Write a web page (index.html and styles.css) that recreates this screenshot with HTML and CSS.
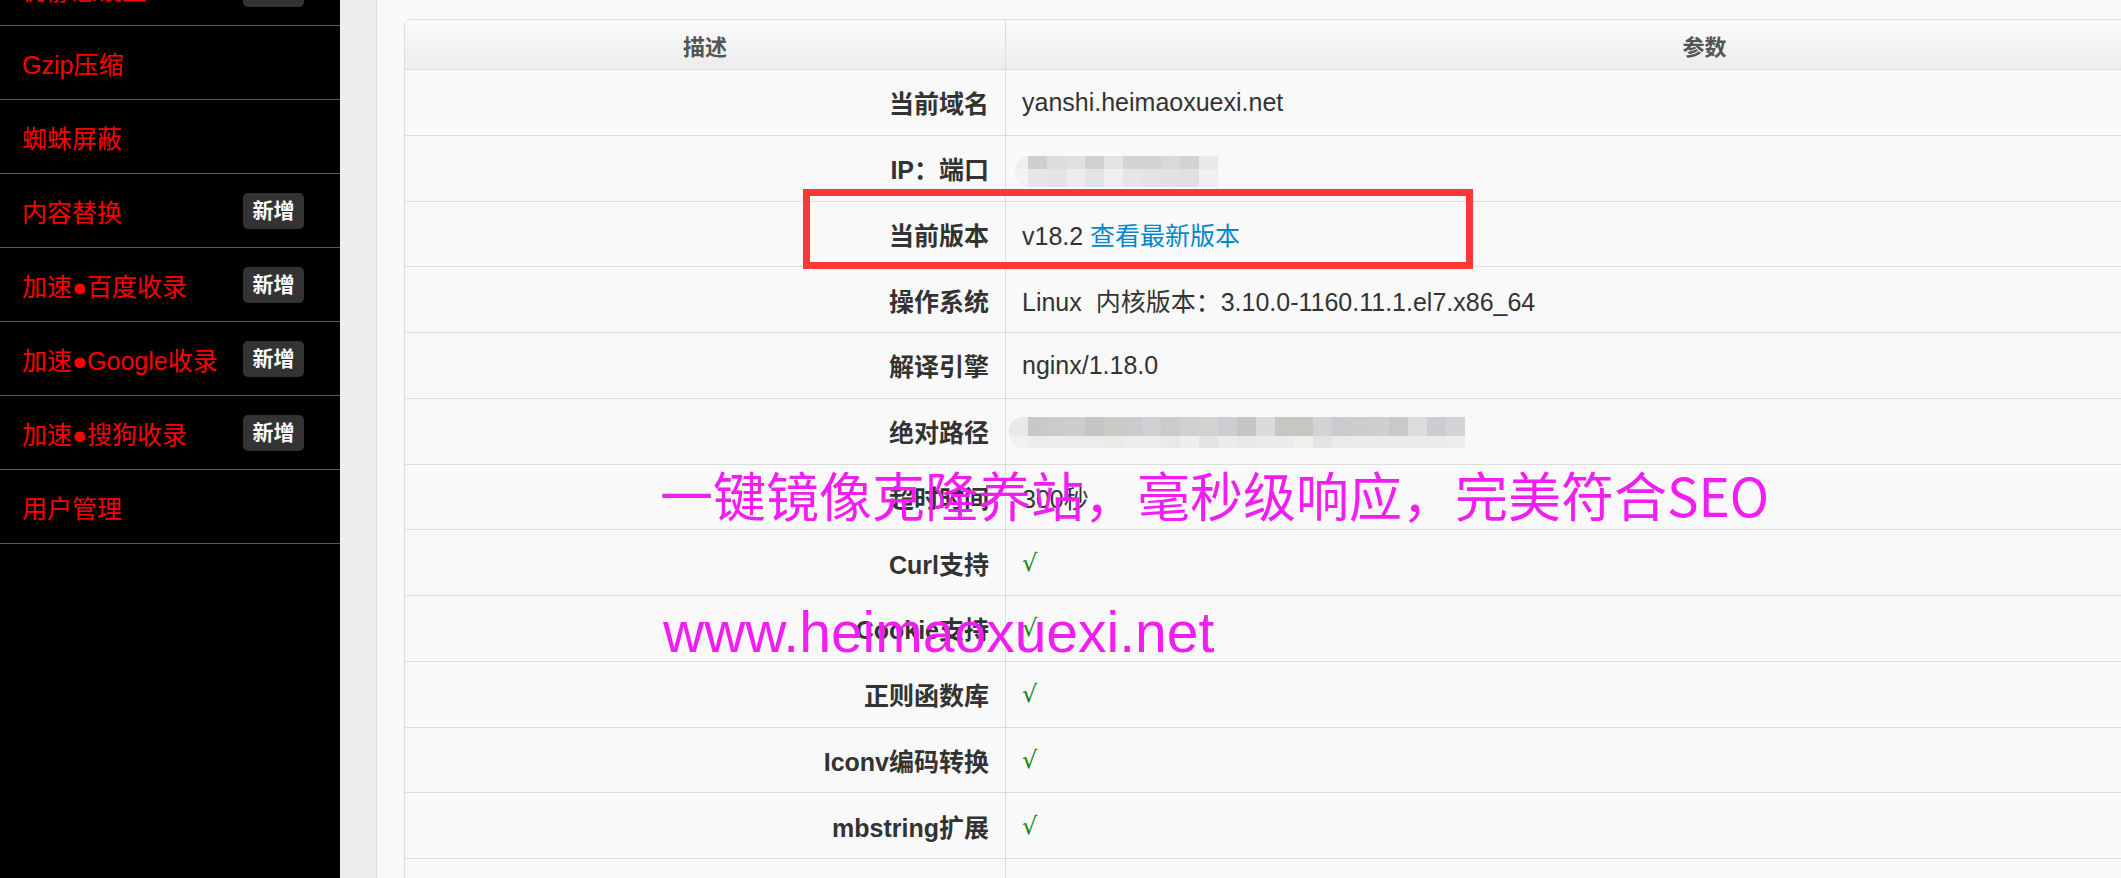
FILE: index.html
```html
<!DOCTYPE html>
<html lang="zh-CN">
<head>
    <meta charset="UTF-8">
    <meta name="viewport" content="width=device-width, initial-scale=1.0">
    <title>系统信息</title>
    <link rel="stylesheet" href="styles.css">
</head>
<body>
    <aside class="sidebar">
        <ul class="menu">
            <li class="menu-item menu-item-cut"><span>伪静态设置</span><span class="badge">新增</span></li>
            <li class="menu-item"><span>Gzip压缩</span></li>
            <li class="menu-item"><span>蜘蛛屏蔽</span></li>
            <li class="menu-item"><span>内容替换</span><span class="badge">新增</span></li>
            <li class="menu-item"><span>加速●百度收录</span><span class="badge">新增</span></li>
            <li class="menu-item"><span>加速●Google收录</span><span class="badge">新增</span></li>
            <li class="menu-item"><span>加速●搜狗收录</span><span class="badge">新增</span></li>
            <li class="menu-item"><span>用户管理</span></li>
        </ul>
    </aside>

    <main class="main">
        <div class="gutter"></div>
        <div class="panel">
            <table class="info">
                <thead>
                    <tr>
                        <th class="col-desc">描述</th>
                        <th>参数</th>
                    </tr>
                </thead>
                <tbody>
                    <tr><td class="label">当前域名</td><td>yanshi.heimaoxuexi.net</td></tr>
                    <tr><td class="label">IP：端口</td><td><span class="mosaic mosaic-ip"></span></td></tr>
                    <tr><td class="label">当前版本</td><td>v18.2 <a href="#" class="link">查看最新版本</a></td></tr>
                    <tr><td class="label">操作系统</td><td>Linux&nbsp; 内核版本：3.10.0-1160.11.1.el7.x86_64</td></tr>
                    <tr><td class="label">解译引擎</td><td>nginx/1.18.0</td></tr>
                    <tr><td class="label">绝对路径</td><td><span class="mosaic mosaic-path"></span></td></tr>
                    <tr><td class="label">超时时间</td><td>300秒</td></tr>
                    <tr><td class="label">Curl支持</td><td class="ok">√</td></tr>
                    <tr><td class="label">Cookie支持</td><td class="ok">√</td></tr>
                    <tr><td class="label">正则函数库</td><td class="ok">√</td></tr>
                    <tr><td class="label">Iconv编码转换</td><td class="ok">√</td></tr>
                    <tr><td class="label">mbstring扩展</td><td class="ok">√</td></tr>
                    <tr><td class="label">GD库</td><td class="ok">√</td></tr>
                </tbody>
            </table>
        </div>
    </main>

    <!-- annotation + watermarks burned over the screenshot -->
    <div class="highlight-box"></div>
    <div class="watermark watermark-slogan">一键镜像克隆养站，毫秒级响应，完美符合SEO</div>
    <div class="watermark watermark-url">www.heimaoxuexi.net</div>
</body>
</html>
```

FILE: styles.css
```css
* {
    margin: 0;
    padding: 0;
    box-sizing: border-box;
}

body {
    width: 2121px;
    height: 878px;
    overflow: hidden;
    display: flex;
    background: #f9f9f9;
    font-family: "Liberation Sans", "Noto Sans CJK SC", sans-serif;
    color: #333;
}

/* sidebar */
.sidebar {
    flex: none;
    width: 340px;
    background: #000;
}

.menu {
    list-style: none;
    margin-top: -48px;
}

.menu-item {
    height: 74px;
    display: flex;
    align-items: center;
    justify-content: space-between;
    padding: 0 36px 0 22px;
    border-bottom: 1px solid #5c5c5c;
    color: #ff0000;
    font-size: 25px;
}

.badge {
    background: #333;
    color: #fff;
    font-size: 21px;
    font-weight: bold;
    width: 61px;
    height: 36px;
    line-height: 36px;
    text-align: center;
    border-radius: 5px;
}

/* main area */
.main {
    flex: 1;
    display: flex;
}

.gutter {
    flex: none;
    width: 37px;
    background: #eeeeee;
    border-right: 1px solid #dcdcdc;
}

.panel {
    flex: 1;
    padding: 19px 0 0 27px;
}

.info {
    width: 2000px;
    border: 1px solid #dddddd;
    border-radius: 7px 7px 0 0;
    border-spacing: 0;
    border-collapse: separate;
    font-size: 25px;
    table-layout: fixed;
}

.info th {
    height: 49px;
    background: linear-gradient(#fbfbfb, #ececec);
    color: #555;
    font-size: 22px;
    font-weight: bold;
    text-align: center;
}

.info th:first-child {
    border-top-left-radius: 6px;
}

.info th + th,
.info td + td {
    border-left: 1px solid #dddddd;
}

.col-desc {
    width: 600px;
}

.info td {
    height: 65.75px;
    padding: 0 16px;
    border-top: 1px solid #dddddd;
    white-space: nowrap;
}

.info .label {
    text-align: right;
    font-weight: bold;
    color: #333;
}

.link {
    color: #0088cc;
    text-decoration: none;
}

.ok {
    color: #118811;
    font-family: "DejaVu Serif", serif;
    font-size: 24px;
}

/* pixelated blur over private values */
.mosaic {
    display: inline-block;
    vertical-align: middle;
}

.mosaic-ip {
    width: 203px;
    height: 31px;
    margin: 6px 0 0 -7px;
    border-radius: 14px 0 0 14px;
    background:
        linear-gradient(to right, #efefef 0 13px, #cfcfcf 13px 32px, #dcdedd 32px 51px, #e0e0e0 51px 70px, #d0d0d0 70px 89px, #e3e3e3 89px 108px, #d6d4d2 108px 127px, #d2d3d5 127px 146px, #d9d9d9 146px 165px, #d2d2d2 165px 184px, #e8e9eb 184px) top / 100% 13px no-repeat,
        linear-gradient(to right, #f3f3f3 0 13px, #e6e6e6 13px 32px, #e4e4e2 32px 51px, #ececec 51px 70px, #e3e5e4 70px 89px, #efefef 89px 108px, #e5e6e5 108px 127px, #e3e3e3 127px 146px, #e2e2e2 146px 165px, #e0e0e0 165px 184px, #f0f0f0 184px) bottom / 100% 18px no-repeat;
}

.mosaic-path {
    width: 456px;
    height: 31px;
    margin: 3px 0 0 -13px;
    border-radius: 14px 0 0 14px;
    background:
        linear-gradient(to right, #e9e9e9 0 19px, #c8c8c8 19px 38px, #cbcbcb 38px 57px, #cdcdcd 57px 76px, #c5c5c5 76px 95px, #cacac6 95px 114px, #cbcbcb 114px 133px, #cfd0d3 133px 152px, #cbcbcb 152px 171px, #d0d0ce 171px 190px, #d2d2cf 190px 209px, #cdced2 209px 228px, #c5c5c5 228px 247px, #d9dcdb 247px 266px, #c8c6c3 266px 304px, #d3d3d3 304px 323px, #cacbce 323px 342px, #cdcdcd 342px 361px, #d0cfcd 361px 380px, #c9c9c9 380px 399px, #dddcda 399px 418px, #cccdd1 418px 437px, #d3d4d8 437px) top / 100% 19px no-repeat,
        linear-gradient(to right, #f0f0f0 0 19px, #ececec 19px 95px, #eaeae7 95px 114px, #ededed 114px 152px, #e9e9e9 152px 171px, #eeeeee 171px 190px, #e4e4e4 190px 209px, #ebebeb 209px 228px, #e8e8e8 228px 247px, #ebebeb 247px 285px, #f0f0ef 285px 304px, #e4e4e4 304px 323px, #eaeaea 323px 342px, #ebebeb 342px 437px, #ececec 437px) bottom / 100% 12px no-repeat;
}

/* overlays */
.highlight-box {
    position: absolute;
    left: 803px;
    top: 189px;
    width: 670px;
    height: 80px;
    border: 7px solid #fd3636;
}

.watermark {
    position: absolute;
    color: #f01ef0;
    white-space: nowrap;
    line-height: 1;
}

.watermark-slogan {
    left: 660px;
    top: 468px;
    font-family: "Noto Sans CJK SC", sans-serif;
    font-size: 53px;
}

.watermark-url {
    left: 663px;
    top: 604px;
    font-family: "Liberation Sans", sans-serif;
    font-size: 57px;
}
```
